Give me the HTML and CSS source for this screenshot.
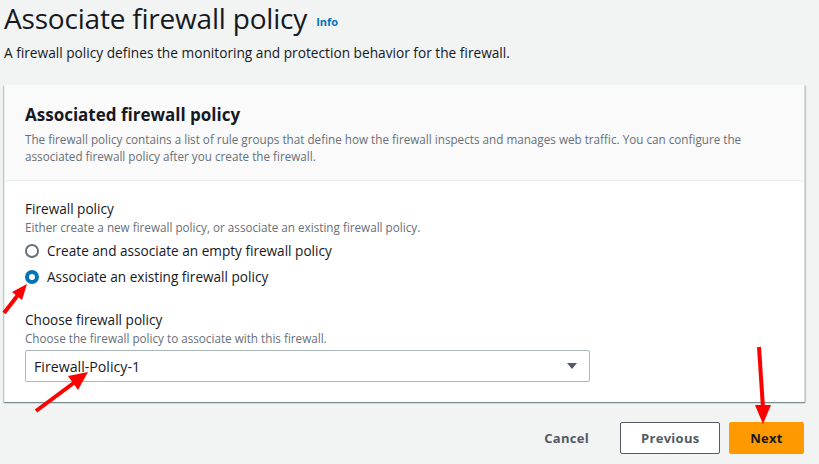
FILE: index.html
```html
<!DOCTYPE html>
<html>
<head>
<meta charset="utf-8">
<link rel="stylesheet" href="styles.css">
</head>
<body>
<div class="page">
  <div class="page-header">
    <h1 class="title">Associate firewall policy <a class="info">Info</a></h1>
    <p class="subtitle">A firewall policy defines the monitoring and protection behavior for the firewall.</p>
  </div>
  <section class="card">
    <div class="card-header">
      <h2 class="card-title">Associated firewall policy</h2>
      <p class="card-desc">The firewall policy contains a list of rule groups that define how the firewall inspects and manages web traffic. You can configure the associated firewall policy after you create the firewall.</p>
    </div>
    <div class="card-body">
      <div class="field">
        <div class="label">Firewall policy</div>
        <div class="hint">Either create a new firewall policy, or associate an existing firewall policy.</div>
        <div class="radios">
          <label class="radio"><span class="dot"></span>Create and associate an empty firewall policy</label>
          <label class="radio"><span class="dot checked"></span>Associate an existing firewall policy</label>
        </div>
      </div>
      <div class="field">
        <div class="label">Choose firewall policy</div>
        <div class="hint">Choose the firewall policy to associate with this firewall.</div>
        <div class="select">
          <span>Firewall-Policy-1</span>
          <svg class="caret" width="12" height="8" viewBox="0 0 12 8"><path d="M1 1h10L6 7z" fill="#545b64"/></svg>
        </div>
      </div>
    </div>
  </section>
  <div class="actions">
    <button class="btn link">Cancel</button>
    <button class="btn normal">Previous</button>
    <button class="btn primary">Next</button>
  </div>
</div>
<svg class="arrows" width="819" height="464" viewBox="0 0 819 464">
  <g stroke="#ff0000" stroke-width="4" fill="#ff0000" stroke-linecap="butt">
    <line x1="4" y1="313" x2="18" y2="295"/>
    <polygon points="27,284 12,292 22,300" stroke="none"/>
    <line x1="36" y1="411" x2="75" y2="382"/>
    <polygon points="88,372 68,376 78,390" stroke="none"/>
    <line x1="759" y1="347" x2="763" y2="408"/>
    <polygon points="763,424 755,405 771,405" stroke="none"/>
  </g>
</svg>
</body>
</html>
```
FILE: styles.css
```css
* { box-sizing: border-box; }
html, body { margin: 0; padding: 0; }
body {
  background: #f2f3f3;
  font-family: "Open Sans", "Noto Sans", sans-serif;
  color: #16191f;
  width: 819px;
  height: 464px;
  overflow: hidden;
  position: relative;
}
.page { padding: 0 14px 0 4px; }
.title {
  margin: 0;
  font-weight: 400;
  font-size: 28px;
  line-height: 36px;
  letter-spacing: -0.2px;
}
.info {
  font-size: 11px;
  font-weight: 700;
  color: #0073bb;
  letter-spacing: 0;
  vertical-align: 3px;
  margin-left: 2px;
}
.subtitle {
  margin: 4px 0 0;
  font-size: 13.7px;
  line-height: 18px;
  color: #16191f;
}
.card {
  margin-top: 23px;
  background: #fff;
  border-right: 1px solid #d5dbdb;
  border-left: 1px solid #eaeded;
  box-shadow: 0 1px 1px 0 rgba(0,28,36,0.3), 1px 1px 1px 0 rgba(0,28,36,0.15), -1px 1px 1px 0 rgba(0,28,36,0.15);
}
.card-header {
  background: #fafafa;
  border-bottom: 1px solid #eaeded;
  padding: 17px 20px 15px;
}
.card-title {
  margin: 0;
  font-size: 17px;
  line-height: 26px;
  font-weight: 700;
}
.card-desc {
  margin: 3px 0 0;
  font-size: 11.7px;
  line-height: 17px;
  color: #687078;
}
.card-body { padding: 18px 20px 20px; }
.field + .field { margin-top: 24px; }
.label { font-size: 13.6px; line-height: 20px; }
.hint { font-size: 11.7px; line-height: 16px; color: #687078; }
.radios { display: flex; flex-direction: column; gap: 8px; margin-top: 7px; }
.radio { display: flex; align-items: center; gap: 8px; font-size: 13.6px; line-height: 18px; }
.dot {
  width: 14px; height: 14px; border-radius: 50%;
  border: 2px solid #687078; background: #fff;
}
.dot.checked { border: 4px solid #0073bb; }
.select {
  margin-top: 4px;
  width: 565px;
  height: 32px;
  border: 1px solid #aab7b8;
  border-radius: 2px;
  display: flex;
  align-items: center;
  justify-content: space-between;
  padding: 0 11px 0 8px;
  font-size: 14.2px;
}
.actions {
  display: flex;
  justify-content: flex-end;
  align-items: center;
  gap: 9px;
  margin-top: 20px;
  padding-right: 1px;
}
.btn {
  font-family: inherit;
  font-size: 13px;
  font-weight: 700;
  height: 32px;
  border-radius: 2px;
  padding: 0 20px;
  cursor: pointer;
  letter-spacing: 0.3px;
}
.btn.link { background: none; border: none; color: #545b64; margin-right: 2px; }
.btn.normal { background: #fff; border: 1px solid #545b64; color: #545b64; width: 100px; }
.btn.primary { background: #ff9900; border: 1px solid #ff9900; color: #16191f; width: 75px; }
.arrows { position: absolute; left: 0; top: 0; pointer-events: none; }
```
